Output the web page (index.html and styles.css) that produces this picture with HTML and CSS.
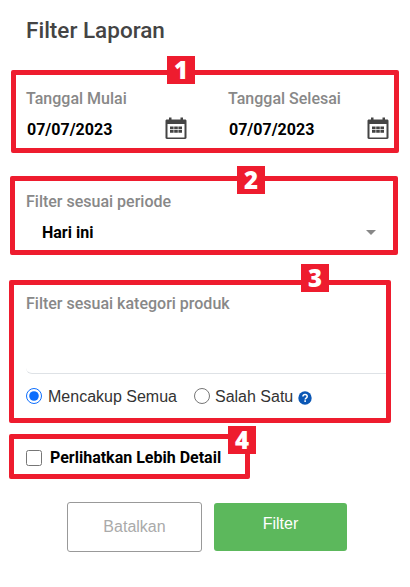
FILE: index.html
```html
<!DOCTYPE html>
<html lang="en">
  <head>
    <meta charset="UTF-8" />
    <meta name="viewport" content="width=device-width, initial-scale=1.0" />
    <title>Filter Laporan</title>
    <link rel="stylesheet" href="styles.css">
  </head>
  <body>
    <h1 class="title">Filter Laporan</h1>

    <!-- Date range -->
    <section class="mark mark-dates">
      <span class="badge badge-1">1</span>
      <div class="date-col date-start">
        <div class="label">Tanggal Mulai</div>
        <div class="date-row">
          <span class="date-value">07/07/2023</span>
          <svg class="cal-icon" viewBox="0 0 24 24" width="24" height="24">
            <path fill="#444" d="M5 1.5h2.5v2h9v-2H19v2h2.2c.7 0 1.3.6 1.3 1.3v17c0 .7-.6 1.2-1.3 1.2H2.800c-.7 0-1.300-.5-1.300-1.200v-17c0-.7.600-1.300 1.300-1.300H5z"/>
            <rect fill="#fff" x="3.500" y="8" width="17" height="13.500"/>
            <path fill="#444" d="M6 10.500h3.600v2.700H6zM10.200 10.500h3.600v2.700h-3.600zM14.400 10.500H18v2.700h-3.600zM6 14h3.600v2.700H6zM10.200 14h3.600v2.700h-3.600zM14.400 14H18v2.700h-3.600z"/>
          </svg>
        </div>
      </div>
      <div class="date-col">
        <div class="label">Tanggal Selesai</div>
        <div class="date-row">
          <span class="date-value">07/07/2023</span>
          <svg class="cal-icon" viewBox="0 0 24 24" width="24" height="24">
            <path fill="#444" d="M5 1.5h2.5v2h9v-2H19v2h2.2c.7 0 1.3.6 1.3 1.3v17c0 .7-.6 1.2-1.3 1.2H2.800c-.7 0-1.300-.5-1.300-1.200v-17c0-.7.600-1.300 1.300-1.300H5z"/>
            <rect fill="#fff" x="3.500" y="8" width="17" height="13.500"/>
            <path fill="#444" d="M6 10.500h3.600v2.700H6zM10.200 10.500h3.600v2.700h-3.600zM14.400 10.500H18v2.700h-3.600zM6 14h3.600v2.700H6zM10.200 14h3.600v2.700h-3.600zM14.400 14H18v2.700h-3.600z"/>
          </svg>
        </div>
      </div>
    </section>

    <!-- Period -->
    <section class="mark mark-period">
      <span class="badge badge-2">2</span>
      <div class="label">Filter sesuai periode</div>
      <div class="select-row">
        <span class="select-value">Hari ini</span>
        <span class="caret"></span>
      </div>
    </section>

    <!-- Product category -->
    <section class="mark mark-category">
      <span class="badge badge-3">3</span>
      <div class="label">Filter sesuai kategori produk</div>
      <div class="tag-input"></div>
      <div class="radio-row">
        <label class="radio-item radio-all">
          <input type="radio" name="match" checked />
          <span>Mencakup Semua</span>
        </label>
        <label class="radio-item">
          <input type="radio" name="match" />
          <span>Salah Satu</span>
        </label>
        <svg class="help-icon" viewBox="0 0 14 14" width="14" height="14">
          <circle cx="7" cy="7" r="6.700" fill="#0b57b5"/>
          <path d="M4.900 5.500C5 4.300 5.900 3.600 7.100 3.600c1.200 0 2.100.7 2.100 1.800 0 1.700-2 1.600-2 3" fill="none" stroke="#fff" stroke-width="1.500"/>
          <rect x="6.300" y="9.300" width="1.700" height="1.600" fill="#fff"/>
        </svg>
      </div>
    </section>

    <!-- Detail toggle -->
    <section class="mark mark-detail">
      <span class="badge badge-4">4</span>
      <label class="check-item">
        <input type="checkbox" />
        <span>Perlihatkan Lebih Detail</span>
      </label>
    </section>

    <div class="actions">
      <button class="btn btn-cancel">Batalkan</button>
      <button class="btn btn-filter">Filter</button>
    </div>
  </body>
</html>
```

FILE: styles.css
```css
body {
  margin: 0;
  background-color: #fff;
  font-family: "Liberation Sans", Arial, sans-serif;
  color: #222;
}

.title {
  margin: 0;
  padding: 18px 0 0 26px;
  height: 52px;
  box-sizing: border-box;
  font-family: Roboto, sans-serif;
  font-size: 22.5px;
  font-weight: 500;
  line-height: 24px;
  color: #444;
}

/* Red annotation boxes */
.mark {
  position: relative;
  box-sizing: border-box;
  border: 5px solid #ee1c2e;
  border-radius: 2px;
}

.mark-dates {
  display: flex;
  width: 388px;
  height: 83px;
  margin: 18px 0 0 11px;
  padding: 14px 0 0 10px;
}

.mark-period {
  width: 388px;
  height: 79px;
  margin: 23px 0 0 10px;
  padding: 11px 0 0 11px;
}

.mark-category {
  width: 382px;
  height: 143px;
  margin: 25px 0 0 9px;
  padding: 9px 0 0 12px;
}

.mark-detail {
  width: 241px;
  height: 45px;
  margin: 11px 0 0 9px;
  padding: 9px 0 0 12px;
}

.badge {
  position: absolute;
  width: 28px;
  height: 28px;
  background-color: #ee1c2e;
  color: #fff;
  font-family: "Open Sans", sans-serif;
  font-size: 24px;
  font-weight: 800;
  line-height: 28px;
  text-align: center;
}

.badge-1 { left: 151px; top: -19px; }
.badge-2 { left: 222px; top: -15px; }
.badge-3 { left: 287px; top: -21px; }
.badge-4 { left: 214px; top: -13px; }

.label {
  font-family: Roboto, sans-serif;
  font-size: 16px;
  font-weight: 500;
  line-height: 20px;
  color: #888;
}

/* Dates */
.date-col {
  width: 162px;
}

.date-start {
  margin-right: 40px;
}

.date-row {
  display: flex;
  align-items: center;
  justify-content: space-between;
  margin-top: 7px;
  padding-left: 1px;
}

.date-value {
  margin-top: 2px;
  font-family: Roboto, sans-serif;
  font-size: 16px;
  font-weight: 700;
  color: #000;
}

.cal-icon {
  display: block;
}

/* Period select */
.select-row {
  display: flex;
  align-items: center;
  justify-content: space-between;
  margin-top: 11px;
  padding: 0 17px 0 16px;
}

.select-value {
  font-family: Roboto, sans-serif;
  font-size: 16px;
  font-weight: 700;
  color: #000;
}

.caret {
  width: 0;
  height: 0;
  border-left: 5px solid transparent;
  border-right: 5px solid transparent;
  border-top: 5px solid #888;
}

/* Category */
.tag-input {
  height: 59px;
  border-bottom: 1px solid #dee2e6;
  border-radius: 0 0 0 6px;
}

.radio-row {
  display: flex;
  align-items: center;
  margin-top: 14px;
  font-size: 16px;
  color: #333;
}

.radio-item {
  display: flex;
  align-items: center;
  margin-right: 5px;
}

.radio-all {
  margin-right: 15px;
}

.radio-item input {
  width: 16px;
  height: 16px;
  margin: -3px 6px 0 0;
  accent-color: #0d6efd;
}

.radio-all + .radio-item input {
  margin-left: 2px;
  margin-right: 5px;
}

.help-icon {
  display: block;
  margin-top: 1px;
}

/* Detail toggle */
.check-item {
  display: flex;
  align-items: center;
  font-family: Roboto, sans-serif;
  font-size: 16px;
  font-weight: 700;
  color: #000;
}

.check-item input {
  width: 16px;
  height: 16px;
  margin: 0 8px 0 0;
}

/* Buttons */
.actions {
  display: flex;
  align-items: flex-start;
  gap: 12px;
  margin: 23px 0 0 67px;
}

.btn {
  box-sizing: border-box;
  border-radius: 3px;
  font-family: "Liberation Sans", Arial, sans-serif;
  font-size: 16px;
}

.btn-cancel {
  width: 135px;
  height: 50px;
  background-color: #fff;
  border: 1px solid #999;
  color: #aaa;
}

.btn-filter {
  width: 133px;
  height: 48px;
  margin-top: 1px;
  padding-bottom: 7px;
  background-color: #5cb85c;
  border: 0;
  color: #fff;
}
```
